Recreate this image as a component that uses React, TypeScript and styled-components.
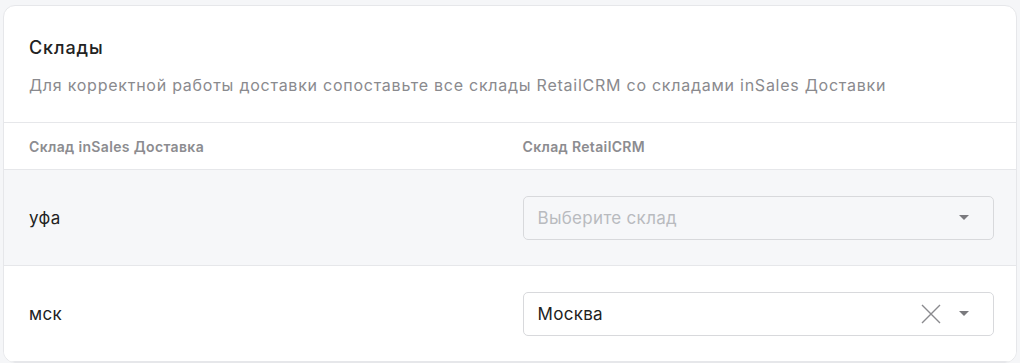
import React from "react";
import styled, { createGlobalStyle } from "styled-components";

const Global = createGlobalStyle`
  html, body { margin: 0; padding: 0; background: #f5f6f8; }
  body { font-family: Inter, "Noto Sans", sans-serif; color: #222; }
`;

const Page = styled.div`
  padding: 5px 3px 0 3px;
`;

const Card = styled.section`
  background: #fff;
  border: 1px solid #e6e7ea;
  border-radius: 12px;
  overflow: hidden;
`;

const Head = styled.header`
  padding: 30px 25px 26px;
  border-bottom: 1px solid #e6e7ea;
`;

const Title = styled.h2`
  margin: 0;
  font-size: 18px;
  font-weight: 500;
  letter-spacing: 0.9px;
  line-height: 24px;
  color: #222;
`;

const Sub = styled.p`
  margin: 14px 0 0;
  font-size: 16px;
  letter-spacing: 0.75px;
  line-height: 22px;
  color: #8a8a8e;
`;

const Row = styled.div<{ $bg?: string; $h: number }>`
  display: grid;
  grid-template-columns: 1fr 1fr;
  column-gap: 22px;
  align-items: center;
  padding: 0 22px 0 25px;
  height: ${(p) => p.$h}px;
  background: ${(p) => p.$bg || "#fff"};
  border-bottom: 1px solid #e6e7ea;
`;

const HeadCell = styled.div`
  font-size: 14px;
  font-weight: 600;
  letter-spacing: 0.35px;
  color: #8c8c90;
`;

const Cell = styled.div`
  font-size: 17px;
  letter-spacing: 0.3px;
  color: #222;
`;

const Select = styled.div<{ $muted?: boolean }>`
  display: flex;
  align-items: center;
  height: 44px;
  box-sizing: border-box;
  padding: 0 24px 0 14px;
  border: 1px solid #d8d9dc;
  border-radius: 5px;
  background: ${(p) => (p.$muted ? "#f6f7f9" : "#fff")};
  font-size: 17px;
  letter-spacing: 0.3px;
  color: ${(p) => (p.$muted ? "#b9bbbf" : "#222")};
`;

const Value = styled.span`
  flex: 1;
`;

const Caret = styled.span`
  width: 0;
  height: 0;
  border-left: 5.5px solid transparent;
  border-right: 5.5px solid transparent;
  border-top: 5.5px solid #7a7a7e;
`;

const Clear = styled.svg`
  width: 20px;
  height: 20px;
  margin-right: 18px;
`;

export default function App() {
  return (
    <Page>
      <Global />
      <Card>
        <Head>
          <Title>Склады</Title>
          <Sub>Для корректной работы доставки сопоставьте все склады RetailCRM со складами inSales Доставки</Sub>
        </Head>
        <Row $h={46}>
          <HeadCell>Склад inSales Доставка</HeadCell>
          <HeadCell>Склад RetailCRM</HeadCell>
        </Row>
        <Row $h={95} $bg="#f6f7f9">
          <Cell>уфа</Cell>
          <Select $muted>
            <Value>Выберите склад</Value>
            <Caret />
          </Select>
        </Row>
        <Row $h={95}>
          <Cell>мск</Cell>
          <Select>
            <Value>Москва</Value>
            <Clear viewBox="0 0 20 20">
              <path d="M1 1 L19 19 M19 1 L1 19" stroke="#8a8a8e" strokeWidth="1.4" fill="none" />
            </Clear>
            <Caret />
          </Select>
        </Row>
      </Card>
    </Page>
  );
}
